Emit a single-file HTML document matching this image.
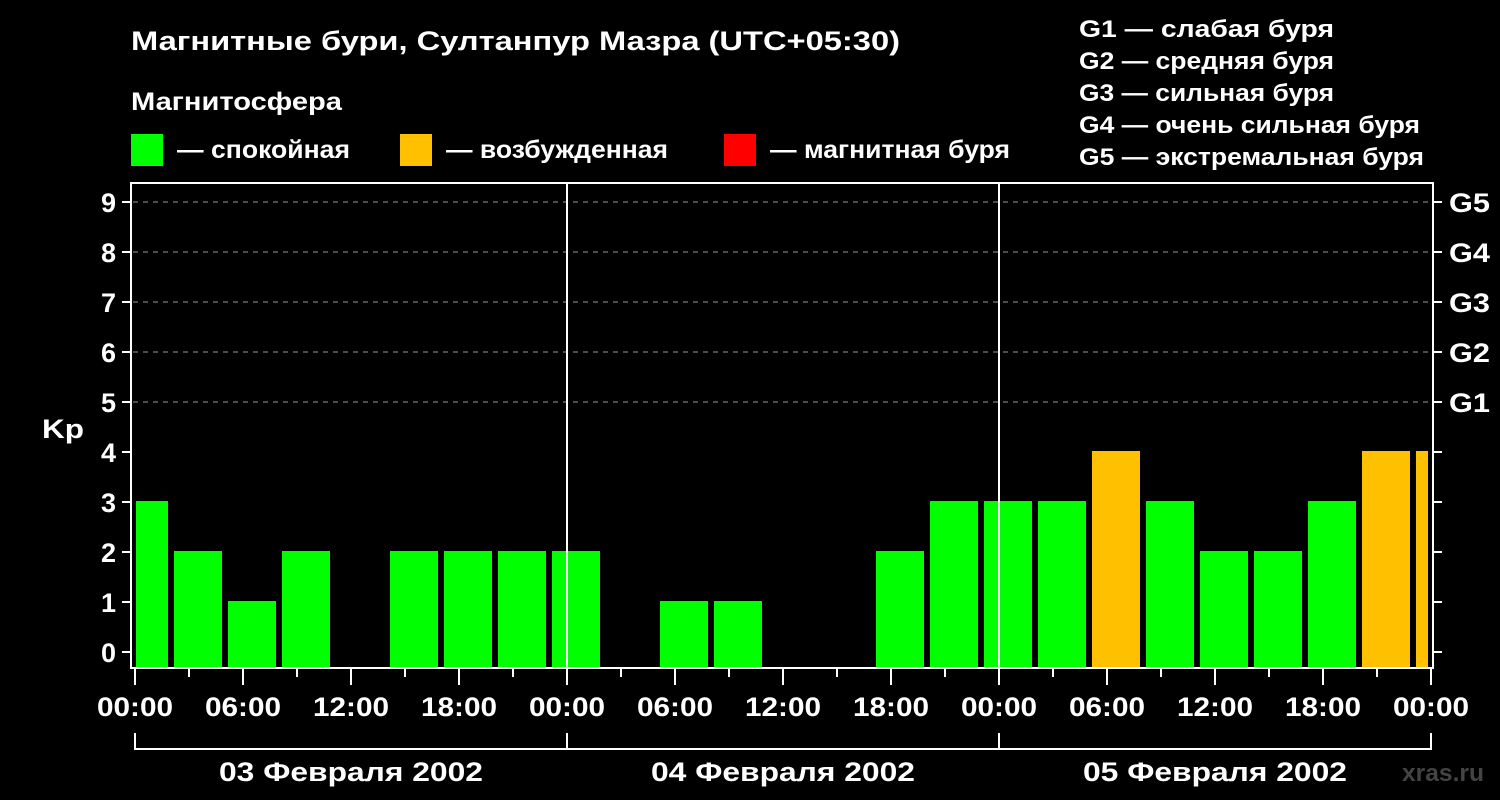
<!DOCTYPE html>
<html><head><meta charset="utf-8"><style>
html,body{margin:0;padding:0;background:#000;}
svg{display:block}
text{font-family:"Liberation Sans",sans-serif;font-weight:bold;fill:#fff}
</style></head><body>
<svg width="1500" height="800" viewBox="0 0 1500 800" xmlns="http://www.w3.org/2000/svg">
<rect width="1500" height="800" fill="#000"/>
<text x="131" y="50" font-size="27" textLength="769" lengthAdjust="spacingAndGlyphs">Магнитные бури, Султанпур Мазра (UTC+05:30)</text>
<text x="131" y="110" font-size="25" textLength="211" lengthAdjust="spacingAndGlyphs">Магнитосфера</text>
<rect x="131" y="134" width="32" height="32" fill="#00ff00"/>
<text x="177" y="158" font-size="25" textLength="173" lengthAdjust="spacingAndGlyphs">— спокойная</text>
<rect x="400" y="134" width="32" height="32" fill="#ffc000"/>
<text x="446" y="158" font-size="25" textLength="222" lengthAdjust="spacingAndGlyphs">— возбужденная</text>
<rect x="724" y="134" width="32" height="32" fill="#ff0000"/>
<text x="770" y="158" font-size="25" textLength="240" lengthAdjust="spacingAndGlyphs">— магнитная буря</text>
<g font-size="24">
<text x="1079" y="37" textLength="255" lengthAdjust="spacingAndGlyphs">G1 — слабая буря</text>
<text x="1079" y="69" textLength="255" lengthAdjust="spacingAndGlyphs">G2 — средняя буря</text>
<text x="1079" y="101" textLength="255" lengthAdjust="spacingAndGlyphs">G3 — сильная буря</text>
<text x="1079" y="133" textLength="341" lengthAdjust="spacingAndGlyphs">G4 — очень сильная буря</text>
<text x="1079" y="165" textLength="345" lengthAdjust="spacingAndGlyphs">G5 — экстремальная буря</text>
</g>
<g stroke="#999" stroke-width="1" stroke-dasharray="5,5">
<line x1="133" y1="202" x2="1432" y2="202"/><line x1="133" y1="252" x2="1432" y2="252"/>
<line x1="133" y1="302" x2="1432" y2="302"/><line x1="133" y1="352" x2="1432" y2="352"/>
<line x1="133" y1="402" x2="1432" y2="402"/>
</g>
<g>
<rect x="136" y="501" width="32" height="167" fill="#00ff00"/>
<rect x="174" y="551" width="48" height="117" fill="#00ff00"/>
<rect x="228" y="601" width="48" height="67" fill="#00ff00"/>
<rect x="282" y="551" width="48" height="117" fill="#00ff00"/>
<rect x="390" y="551" width="48" height="117" fill="#00ff00"/>
<rect x="444" y="551" width="48" height="117" fill="#00ff00"/>
<rect x="498" y="551" width="48" height="117" fill="#00ff00"/>
<rect x="552" y="551" width="48" height="117" fill="#00ff00"/>
<rect x="660" y="601" width="48" height="67" fill="#00ff00"/>
<rect x="714" y="601" width="48" height="67" fill="#00ff00"/>
<rect x="876" y="551" width="48" height="117" fill="#00ff00"/>
<rect x="930" y="501" width="48" height="167" fill="#00ff00"/>
<rect x="984" y="501" width="48" height="167" fill="#00ff00"/>
<rect x="1038" y="501" width="48" height="167" fill="#00ff00"/>
<rect x="1092" y="451" width="48" height="217" fill="#ffc000"/>
<rect x="1146" y="501" width="48" height="167" fill="#00ff00"/>
<rect x="1200" y="551" width="48" height="117" fill="#00ff00"/>
<rect x="1254" y="551" width="48" height="117" fill="#00ff00"/>
<rect x="1308" y="501" width="48" height="167" fill="#00ff00"/>
<rect x="1362" y="451" width="48" height="217" fill="#ffc000"/>
<rect x="1416" y="451" width="12" height="217" fill="#ffc000"/>
</g>
<g stroke="#fff" stroke-width="2" fill="none">
<line x1="131" y1="183" x2="1433" y2="183"/>
<line x1="131" y1="182" x2="131" y2="669"/>
<line x1="1433" y1="182" x2="1433" y2="669"/>
<line x1="130" y1="668" x2="1434" y2="668"/>
<line x1="567" y1="183" x2="567" y2="668"/>
<line x1="999" y1="183" x2="999" y2="668"/>
<path d="M122 202H131M122 252H131M122 302H131M122 352H131M122 402H131M122 452H131M122 502H131M122 552H131M122 602H131M122 652H131"/>
<path d="M1433 202H1442M1433 252H1442M1433 302H1442M1433 352H1442M1433 402H1442M1433 452H1442M1433 502H1442M1433 552H1442M1433 602H1442M1433 652H1442"/>
<path d="M135 668V685M243 668V685M351 668V685M459 668V685M567 668V685M675 668V685M783 668V685M891 668V685M999 668V685M1107 668V685M1215 668V685M1323 668V685M1431 668V685"/>
<path d="M189 668V677M297 668V677M405 668V677M513 668V677M621 668V677M729 668V677M837 668V677M945 668V677M1053 668V677M1161 668V677M1269 668V677M1377 668V677"/>
<path d="M135 733V749H1431V733M567 733V749M999 733V749"/>
</g>
<g font-size="27" text-anchor="end">
<text x="116" y="212">9</text><text x="116" y="262">8</text><text x="116" y="312">7</text>
<text x="116" y="362">6</text><text x="116" y="412">5</text><text x="116" y="462">4</text>
<text x="116" y="512">3</text><text x="116" y="562">2</text><text x="116" y="612">1</text>
<text x="116" y="662">0</text>
</g>
<text x="42" y="438" font-size="27" textLength="42" lengthAdjust="spacingAndGlyphs">Kp</text>
<g font-size="27">
<text x="1449" y="212" textLength="41" lengthAdjust="spacingAndGlyphs">G5</text><text x="1449" y="262" textLength="41" lengthAdjust="spacingAndGlyphs">G4</text><text x="1449" y="312" textLength="41" lengthAdjust="spacingAndGlyphs">G3</text>
<text x="1449" y="362" textLength="41" lengthAdjust="spacingAndGlyphs">G2</text><text x="1449" y="412" textLength="41" lengthAdjust="spacingAndGlyphs">G1</text>
</g>
<g font-size="27" text-anchor="middle">
<text x="135" y="716" textLength="76" lengthAdjust="spacingAndGlyphs">00:00</text><text x="243" y="716" textLength="76" lengthAdjust="spacingAndGlyphs">06:00</text><text x="351" y="716" textLength="76" lengthAdjust="spacingAndGlyphs">12:00</text>
<text x="459" y="716" textLength="76" lengthAdjust="spacingAndGlyphs">18:00</text><text x="567" y="716" textLength="76" lengthAdjust="spacingAndGlyphs">00:00</text><text x="675" y="716" textLength="76" lengthAdjust="spacingAndGlyphs">06:00</text>
<text x="783" y="716" textLength="76" lengthAdjust="spacingAndGlyphs">12:00</text><text x="891" y="716" textLength="76" lengthAdjust="spacingAndGlyphs">18:00</text><text x="999" y="716" textLength="76" lengthAdjust="spacingAndGlyphs">00:00</text>
<text x="1107" y="716" textLength="76" lengthAdjust="spacingAndGlyphs">06:00</text><text x="1215" y="716" textLength="76" lengthAdjust="spacingAndGlyphs">12:00</text><text x="1323" y="716" textLength="76" lengthAdjust="spacingAndGlyphs">18:00</text>
<text x="1431" y="716" textLength="76" lengthAdjust="spacingAndGlyphs">00:00</text>
<text x="351" y="781" textLength="264" lengthAdjust="spacingAndGlyphs">03 Февраля 2002</text>
<text x="783" y="781" textLength="264" lengthAdjust="spacingAndGlyphs">04 Февраля 2002</text>
<text x="1215" y="781" textLength="264" lengthAdjust="spacingAndGlyphs">05 Февраля 2002</text>
</g>
<text x="1402" y="781" font-size="24" style="fill:#444" textLength="82" lengthAdjust="spacingAndGlyphs">xras.ru</text>
</svg>
</body></html>
